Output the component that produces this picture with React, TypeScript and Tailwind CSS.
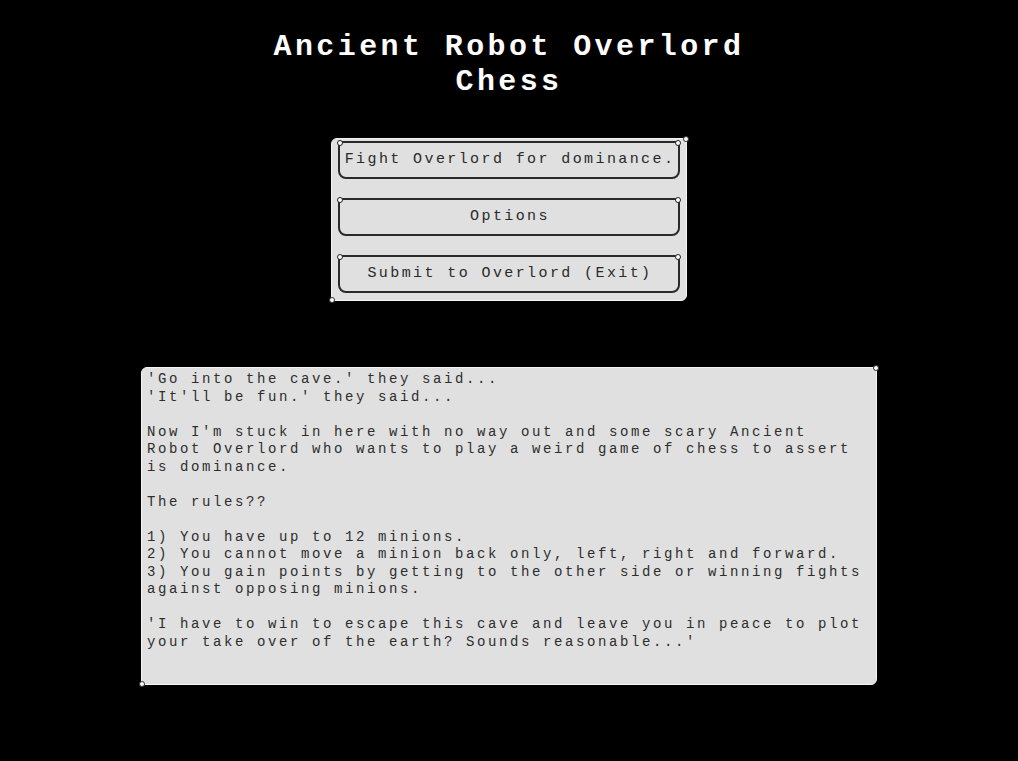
const story = `'Go into the cave.' they said...
'It'll be fun.' they said...

Now I'm stuck in here with no way out and some scary Ancient
Robot Overlord who wants to play a weird game of chess to assert
is dominance.

The rules??

1) You have up to 12 minions.
2) You cannot move a minion back only, left, right and forward.
3) You gain points by getting to the other side or winning fights
against opposing minions.

'I have to win to escape this cave and leave you in peace to plot
your take over of the earth? Sounds reasonable...'`;

const buttons = [
  "Fight Overlord for dominance.",
  "Options",
  "Submit to Overlord (Exit)",
];

function Rivet({ className }: { className: string }) {
  return (
    <span
      className={`absolute h-[6px] w-[6px] rounded-full border border-[#222] bg-white ${className}`}
    />
  );
}

function MenuButton({ label }: { label: string }) {
  return (
    <button className="relative flex h-[38px] w-full items-center justify-center rounded-b-[8px] rounded-t-[3px] border-2 border-[#2a2a2a] bg-[#e0e0e0] text-[15px] tracking-[2.4px] text-[#2a2a2a]">
      <Rivet className="-left-[3px] -top-[3px]" />
      <Rivet className="-right-[3px] -top-[3px]" />
      <span className="pl-[2px]">{label}</span>
    </button>
  );
}

export default function App() {
  return (
    <div
      className="flex min-h-[761px] w-full flex-col items-center bg-black"
      style={{ fontFamily: '"Liberation Mono", "DejaVu Sans Mono", monospace' }}
    >
      {/* Title */}
      <h1 className="mt-[30px] text-center text-[30px] font-bold leading-[35px] tracking-[3.4px] text-white">
        Ancient Robot Overlord
        <br />
        Chess
      </h1>

      {/* Menu */}
      <div className="relative mt-[38px] flex w-[356px] flex-col gap-[19px] rounded-bl-[2px] rounded-br-[6px] rounded-tl-[6px] rounded-tr-[2px] border border-[#f4f4f4] bg-[#e0e0e0] px-[6px] pb-[7px] pt-[2px]">
        <Rivet className="-right-[3px] -top-[3px] h-[5px] w-[5px] border-[#333]" />
        <Rivet className="-bottom-[3px] -left-[3px] h-[5px] w-[5px] border-[#333]" />
        {buttons.map((b) => (
          <MenuButton key={b} label={b} />
        ))}
      </div>

      {/* Story */}
      <div className="relative mt-[66px] h-[318px] w-[736px] rounded-bl-[2px] rounded-br-[6px] rounded-tl-[6px] rounded-tr-[2px] border border-[#f4f4f4] bg-[#e0e0e0] px-[5px] pt-[3px]">
        <Rivet className="-right-[3px] -top-[3px] h-[5px] w-[5px] border-[#333]" />
        <Rivet className="-bottom-[3px] -left-[3px] h-[5px] w-[5px] border-[#333]" />
        <pre
          className="whitespace-pre text-[14px] leading-[17.5px] tracking-[2.6px] text-[#2e2e2e]"
          style={{ fontFamily: '"Liberation Mono", "DejaVu Sans Mono", monospace' }}
        >
          {story}
        </pre>
      </div>
    </div>
  );
}
